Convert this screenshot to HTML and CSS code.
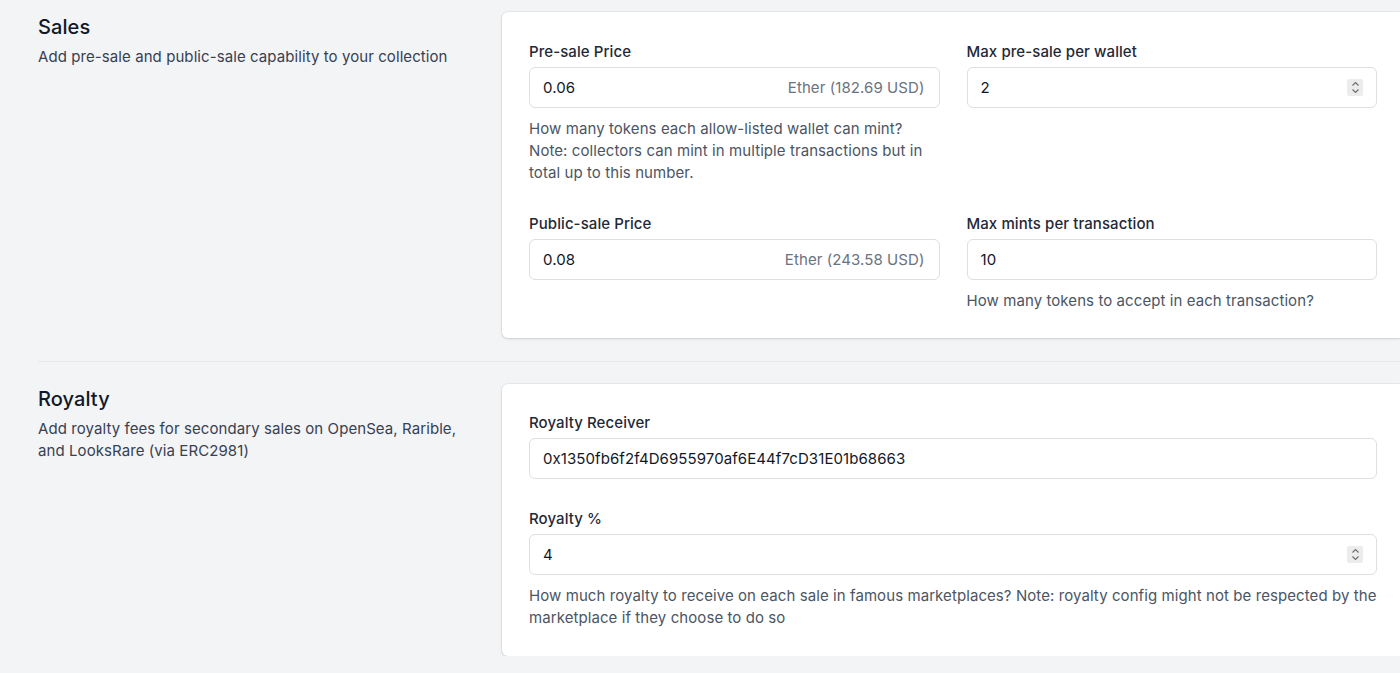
FILE: index.html
```html
<!DOCTYPE html>
<html>
<head>
<meta charset="utf-8">
<link rel="stylesheet" href="styles.css">
</head>
<body>
<div class="page">
  <section class="section">
    <div class="intro">
      <h2 class="title">Sales</h2>
      <p class="desc">Add pre-sale and public-sale capability to your collection</p>
    </div>
    <div class="card">
      <div class="grid two">
        <div class="field">
          <label class="label">Pre-sale Price</label>
          <div class="input"><span class="value">0.06</span><span class="suffix">Ether (182.69 USD)</span></div>
          <p class="help">How many tokens each allow-listed wallet can mint? Note: collectors can mint in multiple transactions but in total up to this number.</p>
        </div>
        <div class="field">
          <label class="label">Max pre-sale per wallet</label>
          <div class="input"><span class="value">2</span><span class="spin"><svg width="9" height="13" viewBox="0 0 9 13"><path d="M1.5 4.5 L4.5 1.5 L7.5 4.5 M1.5 8.5 L4.5 11.5 L7.5 8.5" fill="none" stroke="#6b6b6b" stroke-width="1.1"/></svg></span></div>
        </div>
        <div class="field">
          <label class="label">Public-sale Price</label>
          <div class="input"><span class="value">0.08</span><span class="suffix">Ether (243.58 USD)</span></div>
        </div>
        <div class="field">
          <label class="label">Max mints per transaction</label>
          <div class="input"><span class="value">10</span></div>
          <p class="help">How many tokens to accept in each transaction?</p>
        </div>
      </div>
    </div>
  </section>
  <hr class="divider">
  <section class="section">
    <div class="intro">
      <h2 class="title">Royalty</h2>
      <p class="desc">Add royalty fees for secondary sales on OpenSea, Rarible, and LooksRare (via ERC2981)</p>
    </div>
    <div class="card royalty">
      <div class="grid one">
        <div class="field">
          <label class="label">Royalty Receiver</label>
          <div class="input"><span class="value">0x1350fb6f2f4D6955970af6E44f7cD31E01b68663</span></div>
        </div>
        <div class="field">
          <label class="label">Royalty %</label>
          <div class="input"><span class="value">4</span><span class="spin"><svg width="9" height="13" viewBox="0 0 9 13"><path d="M1.5 4.5 L4.5 1.5 L7.5 4.5 M1.5 8.5 L4.5 11.5 L7.5 8.5" fill="none" stroke="#6b6b6b" stroke-width="1.1"/></svg></span></div>
          <p class="help">How much royalty to receive on each sale in famous marketplaces? Note: royalty config might not be respected by the marketplace if they choose to do so</p>
        </div>
      </div>
    </div>
  </section>
</div>
</body>
</html>
```

FILE: styles.css
```css
* { box-sizing: border-box; }
html, body {
  margin: 0;
  padding: 0;
  background: #f3f4f6;
  overflow: hidden;
}
body {
  font-family: Inter, "Liberation Sans", sans-serif;
  font-size: 15px;
  letter-spacing: 0.08px;
  color: #111827;
}
.page {
  padding: 12px 0 0 38px;
  width: 1404px;
}
.section {
  display: flex;
  align-items: flex-start;
}
.intro {
  width: 464px;
  flex-shrink: 0;
  padding: 1px 40px 0 0;
}
.title {
  margin: 0;
  font-size: 20px;
  line-height: 28px;
  font-weight: 500;
  color: #111827;
}
.desc {
  margin: 5px 0 0;
  font-size: 15px;
  line-height: 22px;
  color: #374151;
}
.card {
  width: 902px;
  flex-shrink: 0;
  background: #fff;
  border-radius: 6px;
  box-shadow: 0 0 0 1px rgba(0,0,0,0.04), 0 1px 3px rgba(0,0,0,0.12);
  padding: 29px 27px 26px;
}
.card.royalty {
  padding: 28px 27px 27px;
}
.grid {
  display: grid;
  column-gap: 27px;
  row-gap: 29px;
}
.grid.two { grid-template-columns: 1fr 1fr; }
.grid.one { grid-template-columns: 1fr; }
.field { display: flex; flex-direction: column; }
.label {
  font-size: 15px;
  line-height: 22px;
  font-weight: 500;
  color: #1f2937;
}
.input {
  margin-top: 4px;
  height: 41px;
  border: 1px solid #dedfe2;
  border-radius: 6px;
  display: flex;
  align-items: center;
  padding: 0 14px 0 13px;
  background: #fff;
}
.value {
  flex: 1;
  font-size: 15px;
  color: #111827;
}
.suffix {
  color: #6b7280;
  font-size: 15px;
}
.spin {
  width: 16px;
  height: 17px;
  background: #ececec;
  border-radius: 2px;
  display: flex;
  align-items: center;
  justify-content: center;
  margin-right: -1px;
}
.help {
  margin: 10px 0 0;
  font-size: 15px;
  line-height: 22px;
  color: #4b5563;
}
.divider {
  border: 0;
  border-top: 1px solid #e8e9ec;
  margin: 23px 0 22px;
  width: 1362px;
}
```
